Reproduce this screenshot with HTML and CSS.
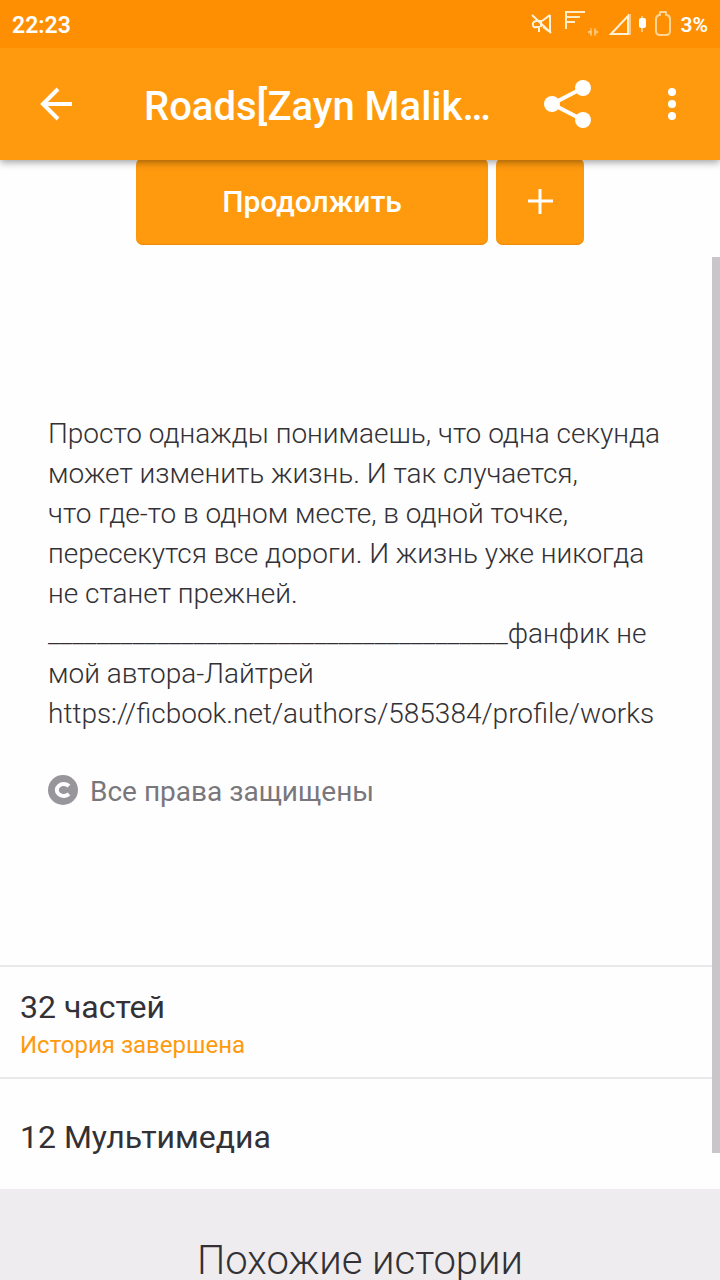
FILE: index.html
```html
<!DOCTYPE html>
<html lang="ru">
<head>
    <meta charset="UTF-8">
    <meta name="viewport" content="width=device-width, initial-scale=1.0">
    <title>Roads[Zayn Malik…</title>
    <link rel="stylesheet" href="styles.css">
</head>
<body>

    <div class="status-bar">
        <span>22:23</span>
        <div class="status-icons">
            <svg width="120" height="32" viewBox="0 0 120 32" fill="none" stroke="#fff" aria-hidden="true">
                <!-- muted speaker -->
                <g stroke="#fff3dc" stroke-width="2">
                    <path d="M1 7l19 18M19 7v17M19 7l-8 6M19 24l-7-5"/>
                    <path d="M11 13H5q-4 1-3 4 0 3 4 2h3M8 19v5M10 14v5"/>
                </g>
                <!-- first signal -->
                <path d="M35 21V3M34 4h20M35 9h14M35 14h9" stroke="#ffecc9" stroke-width="2"/>
                <path d="M60 20v8M64 20v8M57 24l3-1v3zM67 24l-3-2v4z" stroke="#ffd596"/>
                <!-- second signal -->
                <path d="M80 26L97 8v18z" stroke="#fff1d8" stroke-width="2"/>
                <path d="M99 6v21" stroke="#ffc878" stroke-width="2"/>
                <rect x="108" y="10" width="7" height="10" rx="2" fill="#fff" stroke="none"/>
                <path d="M111 8v16"/>
            </svg>
            <svg width="20" height="32" viewBox="0 0 20 32" fill="none" stroke="#ffd596" stroke-width="2" aria-hidden="true">
                <path d="M7 4h6v3h1q3 1 3 4v12q0 4-4 4H7q-4 0-4-4V11q0-3 3-4h1z" stroke-linejoin="round"/>
            </svg>
            <span class="battery">3%</span>
        </div>
    </div>

    <header class="app-bar">
        <button class="icon-btn" aria-label="Назад">
            <svg width="48" height="48" viewBox="0 0 48 48" fill="none" stroke="#fff" stroke-width="4">
                <path d="M40 24H11M26 9L11 24l15 15"/>
            </svg>
        </button>
        <h1>Roads[Zayn Malik…</h1>
        <button class="icon-btn" aria-label="Поделиться">
            <svg width="48" height="48" viewBox="0 0 48 48" fill="#fff">
                <path d="M39 8L8 24l31 16" fill="none" stroke="#fff" stroke-width="4"/>
                <circle cx="8" cy="24" r="8"/>
                <circle cx="39" cy="8" r="8"/>
                <circle cx="39" cy="40" r="8"/>
            </svg>
        </button>
        <button class="icon-btn more-btn" aria-label="Ещё">
            <svg width="48" height="48" viewBox="0 0 48 48" fill="#fff">
                <circle cx="24" cy="12" r="4"/>
                <circle cx="24" cy="24" r="4"/>
                <circle cx="24" cy="36" r="4"/>
            </svg>
        </button>
    </header>

    <main class="content">
        <div class="actions">
            <button class="btn btn-read">Продолжить</button>
            <button class="btn btn-add" aria-label="Добавить">
                <svg width="28" height="28" viewBox="0 0 28 28" stroke="#fff" stroke-width="3">
                    <path d="M14 1v25M2 13h25"/>
                </svg>
            </button>
        </div>

        <section class="description">
            <p>Просто однажды понимаешь, что одна секунда может изменить жизнь. И так случается, что&nbsp;где-то в одном месте, в одной точке, пересекутся все дороги. И жизнь уже никогда не&nbsp;станет прежней.<br>______________________________________фанфик не мой автора-Лайтрей<br>https://ficbook.net/authors/585384/profile/works</p>
            <div class="rights">
                <svg width="30" height="30" viewBox="0 0 30 30" aria-hidden="true">
                    <circle cx="15" cy="15" r="15" fill="#98969a"/>
                    <path d="M21 11a7 6 0 1 0 0 8" fill="none" stroke="#fff" stroke-width="4"/>
                </svg>
                <span>Все права защищены</span>
            </div>
        </section>

        <a class="row" href="#parts">
            <span class="row-title">32 частей</span>
            <span class="row-note">История завершена</span>
        </a>
        <a class="row" href="#media">
            <span class="row-title">12 Мультимедиа</span>
        </a>

        <section class="similar">
            <h2>Похожие истории</h2>
        </section>
        <div class="scroll-thumb"></div>
    </main>

</body>
</html>
```
FILE: styles.css
```css
* {
    box-sizing: border-box;
}

body {
    display: flex;
    flex-direction: column;
    height: 100vh;
    margin: 0;
    overflow: hidden;
    font-family: Roboto, "Noto Sans", sans-serif;
    color: #333135;
    background-color: #fefefe;
}

svg {
    display: block;
}

button {
    padding: 0;
    border: none;
    font-family: inherit;
    color: white;
    cursor: pointer;
}

.status-bar {
    position: relative;
    z-index: 2;
    display: flex;
    flex: none;
    justify-content: space-between;
    align-items: center;
    height: 48px;
    padding: 2px 12px 0;
    background-color: #ff8f02;
    color: white;
    font-size: 23px;
    font-weight: 600;
}

.status-icons {
    display: flex;
    align-items: center;
    gap: 2px;
}

.status-icons svg {
    margin-bottom: 2px;
}

.battery {
    margin-left: 6px;
    font-size: 21px;
}

.app-bar {
    position: relative;
    z-index: 1;
    display: flex;
    flex: none;
    align-items: center;
    height: 112px;
    padding: 0 24px 0 32px;
    background-color: #ff9a0e;
    box-shadow: 0 2px 8px rgba(0, 0, 0, 0.4);
}

.app-bar h1 {
    flex: 1;
    margin: 0 0 0 64px;
    padding-top: 5px;
    color: white;
    font-size: 40px;
    font-weight: 500;
    line-height: 48px;
    white-space: nowrap;
}

.icon-btn {
    flex: none;
    background: none;
}

.more-btn {
    margin-left: 56px;
}

.content {
    position: relative;
    flex: 1;
    overflow: hidden;
}

.actions {
    display: flex;
    justify-content: center;
    gap: 8px;
    margin-top: -2px;
}

.btn {
    display: flex;
    justify-content: center;
    align-items: center;
    height: 87px;
    border-radius: 7px;
    background-color: #ff9a0e;
    box-shadow: inset 0 -1px 1px #ec8c0c;
    font-size: 30px;
    font-weight: 500;
}

.btn-read {
    width: 352px;
}

.btn-add {
    width: 88px;
}

.description {
    padding: 169px 48px 156px;
    font-size: 28px;
}

.description p {
    margin: 0;
    font-weight: 300;
    line-height: 40px;
}

.rights {
    display: flex;
    align-items: center;
    gap: 12px;
    margin-top: 40px;
    color: #79777b;
    line-height: 35px;
}

.rights svg {
    margin-bottom: 3px;
}

.row {
    display: flex;
    flex-direction: column;
    justify-content: center;
    height: 112px;
    padding: 6px 20px 0;
    border-top: 2px solid #e9e8ea;
    color: inherit;
    text-decoration: none;
}

.row-title {
    font-size: 32px;
    line-height: 40px;
}

.row-note {
    color: #ff9a0e;
    font-size: 24px;
    line-height: 36px;
}

.similar {
    padding: 48px 20px;
    background-color: #eeecef;
}

.similar h2 {
    margin: 0;
    font-size: 40px;
    font-weight: 300;
    line-height: 48px;
    text-align: center;
}

/* scroll position marker over the content */
.scroll-thumb {
    position: absolute;
    top: 97px;
    right: 0;
    width: 8px;
    height: 80%;
    background-color: #c8c6c9;
}
```
